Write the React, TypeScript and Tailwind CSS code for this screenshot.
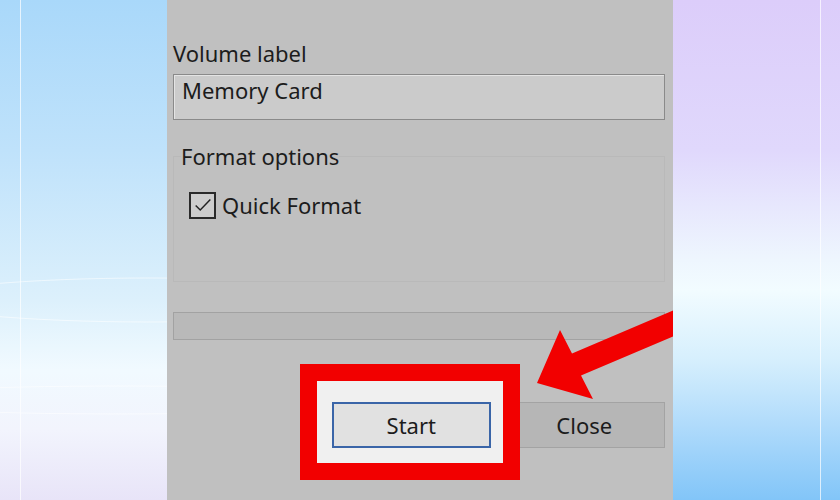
import React from "react";

const font = { fontFamily: '"Noto Sans", "Open Sans", Arial, sans-serif' };

function CheckBox() {
  return (
    <span className="grid h-[27px] w-[27px] shrink-0 place-items-center border-2 border-[#2a2a2a] bg-[#cdcdcd]">
      <svg viewBox="0 0 24 24" className="h-[22px] w-[22px]" fill="none" stroke="#222" strokeWidth="1.6">
        <path d="M4 12.5l5 5L20 6" />
      </svg>
    </span>
  );
}

export default function App() {
  return (
    <div className="flex h-[500px] w-[840px] overflow-hidden text-[#1c1c1c]" style={font}>
      {/* left backdrop */}
      <div className="relative w-[167px] shrink-0 bg-[linear-gradient(180deg,#a9d8fa_0%,#bfe2fb_30%,#dcf0fc_60%,#f1faff_74%,#f2f4fd_86%,#e8e4f8_100%)]">
        <div className="absolute left-[20px] top-0 h-full w-px bg-white/70" />
        <svg className="absolute inset-0 h-full w-full" viewBox="0 0 167 500" fill="none">
          <ellipse cx="150" cy="300" rx="230" ry="22" stroke="white" strokeOpacity="0.55" />
          <ellipse cx="120" cy="400" rx="260" ry="14" stroke="white" strokeOpacity="0.5" />
        </svg>
      </div>

      {/* dialog */}
      <div className="relative w-[506px] shrink-0 overflow-hidden bg-[#c0c0c0] pl-[6px] pr-[8px] pt-[39px]">
        <div className="h-[28px] text-[22px] leading-[28px]">Volume label</div>
        <div className="mt-[7px] h-[46px] border border-[#8a8a8a] bg-[#cbcbcb] pl-[8px] pt-[1px] text-[22px] leading-[28px] shadow-[inset_1px_1px_0_#e4e4e4]">
          Memory Card
        </div>

        <fieldset className="mt-[22px] h-[140px] border border-[#b9b9b9] px-[7px]">
          <legend className="text-[22px] leading-[28px]">Format options</legend>
          <label className="mt-[21px] flex items-center gap-[6px] pl-[8px] text-[22px] leading-[28px]">
            <CheckBox />
            Quick Format
          </label>
        </fieldset>

        <div className="mt-[30px] h-[28px] border border-[#a2a2a2] bg-[#b9b9b9]" />

        <div className="relative mt-[62px] flex gap-[13px] pl-[159px]">
          <div className="absolute left-[127px] top-[-38px] h-[116px] w-[220px] border-[17px] border-[#f20000] bg-[#f0f0f0]" />
          <button className="relative z-10 h-[46px] w-[159px] border-2 border-[#3a65a8] bg-[#e1e1e1] text-[22px]">
            Start
          </button>
          <button className="h-[46px] w-[162px] border border-[#a3a3a3] bg-[#b6b6b6] text-[22px]">
            Close
          </button>
        </div>

        <svg className="pointer-events-none absolute inset-0 z-20 h-full w-full" viewBox="167 0 506 500">
          <polygon
            fill="#f20000"
            points="537,383 560,330 572,353.5 673,310.6 673,336.6 581,375.5 593,399"
          />
        </svg>
      </div>

      {/* right backdrop */}
      <div className="relative flex-1 bg-[linear-gradient(180deg,#dccdfa_0%,#e0d8fc_30%,#eef6fe_52%,#f2fcff_58%,#d6effd_72%,#b0dbfb_85%,#82c5f8_100%)]">
        <div className="absolute left-[147px] top-0 h-full w-px bg-white/70" />
      </div>
    </div>
  );
}
